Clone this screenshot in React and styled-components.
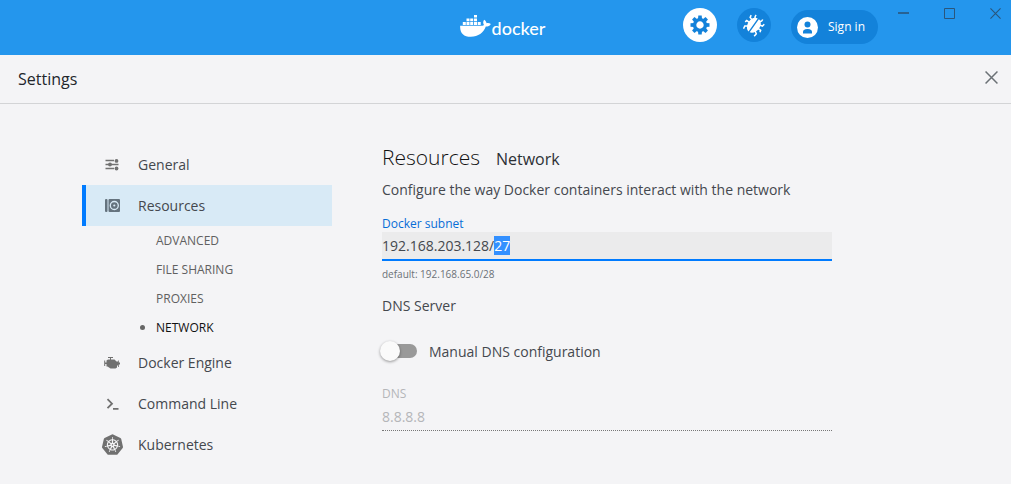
import React, { useEffect, useRef } from "react";
import styled, { createGlobalStyle } from "styled-components";
import { SiKubernetes } from "react-icons/si";

const GlobalStyle = createGlobalStyle`
  *, *::before, *::after { box-sizing: border-box; }
  body {
    margin: 0;
    background: #f4f4f6;
    color: #44484e;
    font-family: "Open Sans", "Noto Sans", sans-serif;
    font-size: 14px;
    line-height: 20px;
  }
  button, input { font: inherit; color: inherit; }
  h1, h2, p, ul { margin: 0; padding: 0; font-weight: 400; }
  ul { list-style: none; }
`;

const Page = styled.div`
  min-height: 100vh;
`;

const TopBar = styled.header`
  display: grid;
  grid-template-columns: 1fr auto 1fr;
  height: 55px;
  background: #2496ed;
  color: #fff;
`;

const Logo = styled.div`
  grid-column: 2;
  display: flex;
  align-items: center;
  gap: 1px;
  padding: 0 6px 3px 0;
`;

const LogoText = styled.span`
  font-family: Lato, sans-serif;
  font-size: 18px;
  font-weight: 500;
  line-height: 24px;
  padding-top: 3px;
`;

const Actions = styled.div`
  display: flex;
  justify-content: flex-end;
  align-items: flex-start;
  gap: 20px;
  padding: 8px 10px 0 0;
`;

const PlainButton = styled.button`
  display: flex;
  align-items: center;
  justify-content: center;
  padding: 0;
  border: 0;
  background: none;
  cursor: pointer;
`;

const RoundButton = styled(PlainButton)`
  width: 34px;
  height: 34px;
  border-radius: 50%;
  background: ${(p) => (p.$active ? "#fff" : "#1382da")};
  color: ${(p) => (p.$active ? "#1382da" : "#fff")};
`;

const SignInButton = styled(PlainButton)`
  gap: 10px;
  height: 34px;
  margin-top: 2px;
  padding: 0 13px 0 6px;
  border-radius: 17px;
  background: #1382da;
  color: #fff;
  font-size: 12px;
  font-weight: 500;
`;

const WindowControls = styled.div`
  display: flex;
  gap: 35px;
  color: #2a567c;
`;

const TitleBar = styled.div`
  display: flex;
  align-items: center;
  justify-content: space-between;
  height: 49px;
  padding: 0 13px 3px 18px;
  border-bottom: 1px solid #d3d4d6;
  color: #6b7176;
`;

const Title = styled.h1`
  padding-top: 3px;
  color: #22262b;
  font-size: 16px;
  font-weight: 500;
  line-height: 24px;
`;

const Body = styled.div`
  display: flex;
  gap: 50px;
  max-width: 914px;
  padding: 40px 82px 16px;
`;

const Nav = styled.nav`
  flex: 0 0 250px;
`;

const NavLink = styled.a`
  display: flex;
  align-items: center;
  gap: 15px;
  height: 41px;
  padding-left: 15px;
  border-left: 4px solid ${(p) => (p.$active ? "#007bff" : "transparent")};
  background: ${(p) => (p.$active ? "#d8eaf6" : "transparent")};
  color: #44484e;
  text-decoration: none;
`;

const NavIcon = styled.span`
  display: flex;
  justify-content: center;
  width: 22px;
  color: ${(p) => (p.$active ? "#65737e" : "#707070")};
`;

const SubLink = styled.a`
  display: flex;
  align-items: center;
  gap: 11px;
  height: 29px;
  padding-left: 58px;
  color: ${(p) => (p.$active ? "#111" : "#606060")};
  font-size: 12px;
  text-decoration: none;

  &::before {
    content: "";
    width: 5px;
    height: 5px;
    border-radius: 50%;
    background: ${(p) => (p.$active ? "#666" : "transparent")};
  }
`;

const Main = styled.main`
  flex: 1 1 0;
  min-width: 0;
`;

const Heading = styled.div`
  display: flex;
  align-items: baseline;
  gap: 16px;
  height: 28px;
  color: #2c3035;
`;

const Section = styled.h2`
  color: #111;
  font-size: 21px;
  font-weight: 300;
  line-height: 26px;
`;

const Subsection = styled.span`
  font-size: 16px;
  line-height: 24px;
`;

const Description = styled.p`
  margin-top: 8px;
`;

const FieldLabel = styled.label`
  display: block;
  margin-top: ${(p) => (p.$disabled ? 24 : 16)}px;
  color: ${(p) => (p.$disabled ? "#b4b6b9" : "#086dd7")};
  font-size: 12px;
  line-height: 16px;
`;

const TextInput = styled.input`
  display: block;
  width: 100%;
  height: 29px;
  padding: 0;
  border: 0;
  border-bottom: 2px solid #007bff;
  border-radius: 0;
  outline: 0;
  background: #ebebec;

  &::selection {
    background: #3390ff;
    color: #fff;
  }

  &:disabled {
    border-bottom: 1px dotted #777;
    background: transparent;
    color: #b4b6b9;
  }
`;

const Hint = styled.p`
  margin-top: 6px;
  color: #6b7176;
  font-size: 10px;
  line-height: 14px;
`;

const GroupTitle = styled.p`
  margin-top: 15px;
`;

const SwitchLabel = styled.label`
  display: flex;
  align-items: center;
  gap: 12px;
  margin-top: 26px;
`;

const Switch = styled.input.attrs({ type: "checkbox", role: "switch" })`
  appearance: none;
  display: flex;
  align-items: center;
  width: 34px;
  height: 14px;
  margin: 0 0 2px 1px;
  border-radius: 7px;
  background: #999;

  &::before {
    content: "";
    flex: none;
    width: 20px;
    height: 20px;
    margin-left: -3px;
    border-radius: 50%;
    background: #fafafa;
    box-shadow: 0 1px 3px rgba(0, 0, 0, 0.4);
  }

  &:checked {
    justify-content: flex-end;
    background: #80bdff;
  }
`;

const WhaleIcon = () => (
  <svg width="31" height="24" viewBox="0 0 31 24" fill="currentColor" aria-hidden="true">
    <path d="M14 1H17V3.500H14ZM6.500 4.500H9.500V7.300H6.500ZM10.200 4.500H13.200V7.300H10.200ZM14 4.500H17V7.300H14ZM2.800 8.100H5.800V10.900H2.800ZM6.500 8.100H9.500V10.900H6.500ZM10.200 8.100H13.200V10.900H10.200ZM14 8.100H17V10.900H14ZM17.700 8.100H20.700V10.900H17.700Z" />
    <path d="M.2 11.700H21.500C22.800 11.700 23.700 11.300 24 11C22.800 9.500 23 7.200 24.200 5.800C25.700 6.900 26.400 8 26.500 9.300C28 8.900 29.700 9.200 30.800 9.900C29.900 11.800 28.200 12.600 25.800 12.600C23.500 18.800 18.300 22.800 10.800 22.800C3.500 22.800 -.3 18.800 .2 11.700Z" />
  </svg>
);

const GearIcon = () => (
  <svg width="20" height="20" viewBox="-10 -10 20 20" fill="currentColor" aria-hidden="true">
    {[0, 45, 90, 135, 180, 225, 270, 315].map((a) => (
      <path key={a} d="M-2-6L-1.700-9.500H1.700L2-6Z" transform={`rotate(${a})`} />
    ))}
    <circle r="5.400" fill="none" stroke="currentColor" strokeWidth="3.400" />
  </svg>
);

const BugIcon = () => (
  <svg width="22" height="24" viewBox="-11 -12 22 24" aria-hidden="true">
    <g transform="rotate(35)" fill="none" stroke="currentColor" strokeWidth="1.500">
      <path d="M-2.500-6Q-4.500-7-4-9.500M2.500-6Q4.500-7 4-9.500M-4-3L-7.500-4L-8-6.500M4-3L7.500-4L8-6.500M-4 .5H-8.500L-9 2.500M4 .5H8.500L9 2.500M-4 4L-7 6L-6.500 9M4 4L7 6L6.500 9" />
      <path fill="currentColor" stroke="none" d="M-.7-7.500C-4-7.300-6.200-4-6.200 0S-4 7.800-.7 8.500ZM.7-7.500C4-7.300 6.200-4 6.200 0S4 7.800.7 8.500Z" />
    </g>
  </svg>
);

const UserIcon = () => (
  <svg width="21" height="21" viewBox="0 0 21 21" aria-hidden="true">
    <circle cx="10.500" cy="10.500" r="10.500" fill="#fff" />
    <circle cx="10.500" cy="7.500" r="3" fill="#1382da" />
    <path d="M6 16.500V15C6 12.800 8.500 12 10.500 12S15 12.800 15 15V16.500Z" fill="#1382da" />
  </svg>
);

const CrossIcon = ({ size, width = 1.2 }) => (
  <svg width={size} height={size} viewBox="0 0 12 12" fill="none" stroke="currentColor" strokeWidth={width} aria-hidden="true">
    <path d="M.5.5L11.500 11.500M11.500.5L.5 11.500" />
  </svg>
);

const MinimizeIcon = () => (
  <svg width="11" height="11" viewBox="0 0 11 11" aria-hidden="true">
    <path d="M0 5H11" stroke="currentColor" strokeWidth="1.600" />
  </svg>
);

const MaximizeIcon = () => (
  <svg width="11" height="11" viewBox="0 0 11 11" aria-hidden="true">
    <path d="M.5.5H10.500V10.500H.5Z" fill="none" stroke="currentColor" />
  </svg>
);

const SlidersIcon = () => (
  <svg width="14" height="12" viewBox="0 0 14 12" fill="currentColor" aria-hidden="true">
    <path d="M.5 1.500H9M.5 5.500H13.500M.5 9.500H9" stroke="currentColor" strokeWidth="1.300" />
    <circle cx="11.500" cy="1.900" r="1.900" />
    <circle cx="5" cy="5.500" r="1.900" />
    <circle cx="11.500" cy="9.500" r="1.900" />
  </svg>
);

const ResourcesIcon = () => (
  <svg width="15" height="13" viewBox="0 0 15 13" fill="currentColor" aria-hidden="true">
    <rect width="2.500" height="13" rx="1" />
    <rect x="3.500" width="11.500" height="13" rx="1" />
    <circle cx="9.300" cy="6.500" r="4" fill="none" stroke="#d8eaf6" strokeWidth="1.300" />
    <circle cx="9.300" cy="6.500" r="1.100" fill="#d8eaf6" />
  </svg>
);

const EngineIcon = () => (
  <svg width="16" height="12" viewBox="0 0 16 12" fill="currentColor" aria-hidden="true">
    <path d="M4 0H9V1H7V2.500H10.500L12.500 4.500H14V3.500H14.800V5.500H16V7.500H14.800V10H14V8.500H13V10.500L11.500 11.500H6.500L3.500 9.500H2.500V7H1.200V9H.2V3.500H1.200V5.500H2.500V3.500L4 2.500H6V1H4Z" />
  </svg>
);

const TerminalIcon = () => (
  <svg width="13" height="12" viewBox="0 0 13 12" fill="none" stroke="currentColor" strokeWidth="1.800" aria-hidden="true">
    <path d="M1.500 1.200L6 5.700L1.500 10.200M7 10.800H12.500" />
  </svg>
);

const navItems = [
  { label: "General", icon: <SlidersIcon /> },
  {
    label: "Resources",
    icon: <ResourcesIcon />,
    active: true,
    children: ["ADVANCED", "FILE SHARING", "PROXIES", "NETWORK"],
  },
  { label: "Docker Engine", icon: <EngineIcon /> },
  { label: "Command Line", icon: <TerminalIcon /> },
  { label: "Kubernetes", icon: <SiKubernetes size={21} /> },
];

export default function App() {
  const subnetRef = useRef(null);

  useEffect(() => {
    const input = subnetRef.current;
    input.focus();
    input.setSelectionRange(input.value.indexOf("/") + 1, input.value.length);
  }, []);

  return (
    <Page>
      <GlobalStyle />
      <TopBar>
        <Logo>
          <WhaleIcon />
          <LogoText>docker</LogoText>
        </Logo>
        <Actions>
          <RoundButton $active aria-label="Settings"><GearIcon /></RoundButton>
          <RoundButton aria-label="Troubleshoot"><BugIcon /></RoundButton>
          <SignInButton><UserIcon />Sign in</SignInButton>
          <WindowControls>
            <PlainButton aria-label="Minimize"><MinimizeIcon /></PlainButton>
            <PlainButton aria-label="Maximize"><MaximizeIcon /></PlainButton>
            <PlainButton aria-label="Close window"><CrossIcon size={11} /></PlainButton>
          </WindowControls>
        </Actions>
      </TopBar>
      <TitleBar>
        <Title>Settings</Title>
        <PlainButton aria-label="Close settings"><CrossIcon size={13} width={1.4} /></PlainButton>
      </TitleBar>
      <Body>
        <Nav aria-label="Settings sections">
          <ul>
            {navItems.map(({ label, icon, active, children }) => (
              <li key={label}>
                <NavLink href="#" $active={active}>
                  <NavIcon $active={active}>{icon}</NavIcon>
                  {label}
                </NavLink>
                {children && (
                  <ul>
                    {children.map((name) => (
                      <li key={name}>
                        <SubLink href="#" $active={name === "NETWORK"}>{name}</SubLink>
                      </li>
                    ))}
                  </ul>
                )}
              </li>
            ))}
          </ul>
        </Nav>
        <Main>
          <Heading>
            <Section>Resources</Section>
            <Subsection>Network</Subsection>
          </Heading>
          <Description>Configure the way Docker containers interact with the network</Description>
          <FieldLabel htmlFor="subnet">Docker subnet</FieldLabel>
          <TextInput id="subnet" ref={subnetRef} defaultValue="192.168.203.128/27" spellCheck={false} />
          <Hint>default: 192.168.65.0/28</Hint>
          <GroupTitle>DNS Server</GroupTitle>
          <SwitchLabel>
            <Switch />
            Manual DNS configuration
          </SwitchLabel>
          <FieldLabel htmlFor="dns" $disabled>DNS</FieldLabel>
          <TextInput id="dns" defaultValue="8.8.8.8" disabled />
        </Main>
      </Body>
    </Page>
  );
}
